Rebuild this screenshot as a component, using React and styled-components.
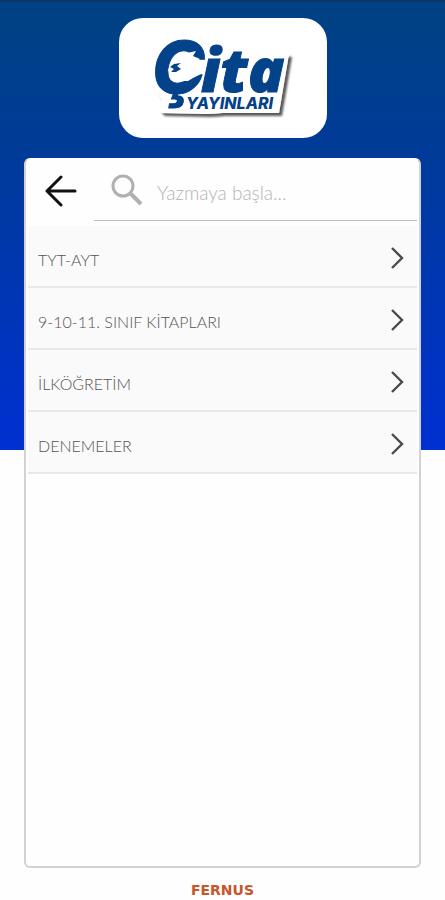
import React, { useState } from "react";
import styled, { createGlobalStyle } from "styled-components";

const GlobalStyle = createGlobalStyle`
  * {
    box-sizing: border-box;
  }

  body {
    margin: 0;
    background: #fefefe;
    font-family: "Lato", "Open Sans", sans-serif;
  }
`;

const Page = styled.div`
  display: flex;
  flex-direction: column;
  align-items: center;
  min-height: 100vh;
  padding: 16px 24px 0;
  border-top: 2px solid #0a3566;
  background: linear-gradient(#004282, #003a9c 38%, #0030d2) no-repeat top / 100% calc(50vh - 2px);
`;

const LogoCard = styled.header`
  display: flex;
  align-items: center;
  justify-content: center;
  width: 208px;
  height: 120px;
  margin-bottom: 20px;
  border-radius: 24px;
  background: #fff;
`;

const LogoText = styled.text`
  font-family: ${({ $font }) => $font}, sans-serif;
  font-style: italic;
  font-weight: 800;
  font-size: ${({ $size }) => $size}px;
  fill: #04428a;
  stroke: #04428a;
  stroke-width: ${({ $stroke }) => $stroke || 0};
`;

const Panel = styled.main`
  flex: 1;
  width: 100%;
  padding: 0 2px;
  border: 2px solid #d2d2d2;
  border-top-color: #fff;
  border-radius: 6px;
  background: #fefefe;
`;

const Toolbar = styled.div`
  display: flex;
  height: 61px;
  margin-bottom: 5px;
`;

const BackButton = styled.button`
  display: flex;
  align-items: center;
  justify-content: center;
  width: 66px;
  padding: 0;
  border: 0;
  background: none;
  color: #111;
  cursor: pointer;
`;

const SearchBox = styled.label`
  display: flex;
  flex: 1;
  align-items: center;
  gap: 14px;
  min-width: 0;
  padding-left: 17px;
  border-bottom: 1px solid #bdbdbd;
  color: #b0b0b0;
`;

const SearchInput = styled.input`
  flex: 1;
  min-width: 0;
  padding: 4px 0 0;
  border: 0;
  outline: none;
  background: none;
  color: #666;
  font-family: inherit;
  font-size: 19px;
  font-weight: 300;

  &::placeholder {
    color: #b4b4b4;
    opacity: 1;
  }
`;

const List = styled.ul`
  margin: 0;
  padding: 0;
  list-style: none;
`;

const RowButton = styled.button`
  display: flex;
  align-items: center;
  justify-content: space-between;
  width: 100%;
  height: 62px;
  padding: 4px 13px 0 10px;
  border: 0;
  border-bottom: 2px solid #e8e8e8;
  background: #fafafa;
  color: #555;
  font-family: inherit;
  font-size: 16px;
  font-weight: 300;
  line-height: 20px;
  text-align: left;
  cursor: pointer;
`;

const RowLabel = styled.span`
  padding-top: 4px;
`;

const Footer = styled.footer`
  padding: 14px 0 2px;
  color: #c9552b;
  font-family: "DejaVu Sans", sans-serif;
  font-size: 14px;
  font-weight: 700;
  line-height: 16px;
  text-align: center;
`;

const categories = [
  "TYT-AYT",
  "9-10-11. SINIF KİTAPLARI",
  "İLKÖĞRETİM",
  "DENEMELER",
];

function Logo() {
  return (
    <svg width="150" height="120" viewBox="0 -17 150 120" role="img" aria-label="Çita Yayınları">
      <defs>
        <filter id="logoShadow" x="-10%" y="-10%" width="125%" height="130%">
          <feDropShadow dx="3" dy="3" stdDeviation="1" floodColor="#222" floodOpacity="0.75" />
        </filter>
      </defs>
      <path
        d="M5 34 C5 14 18 4 34 4 L58 8 L141 19 L131 78 L74 78 Q66 79 58 79 L14 78 Q8 74 14 65 C8 58 4 48 5 34Z"
        fill="#fff"
        filter="url(#logoShadow)"
      />
      <path d="M0 0 H144 V19 L138 23 L60 14 L30 2 L6 20 V66 L0 70Z" fill="#fff" />
      <LogoText $font="Inter" $size={71} $stroke={1} x="4" y="58">Ç</LogoText>
      <LogoText $font='"Open Sans"' $size={60} $stroke={1} x="53" y="57">ita</LogoText>
      <LogoText $font="Inter" $size={16} x="38" y="74">YAYINLARI</LogoText>
      {/* cheetah head inside the big letter */}
      <path
        d="M20 35 L23 28 L28 24 L31 17 L34 21 L39 18 L48 16 L45 21 L52 24 L47 28 L53 33 L53 39 L45 43 L40 46 L33 46 L27 45 L23 42 L29 40 L22 39Z"
        fill="#fff"
      />
      <path
        d="M22 32 L26 29 L33 28 L29 31 L33 34 L28 37 L23 37 L26 34Z"
        fill="#04428a"
      />
    </svg>
  );
}

export default function App() {
  const [search, setSearch] = useState("");

  const handleSearchChange = (event) => {
    setSearch(event.target.value);
  };

  const visible = categories.filter((name) =>
    name.toLocaleLowerCase("tr").includes(search.toLocaleLowerCase("tr"))
  );

  return (
    <>
      <GlobalStyle />
      <Page>
        <LogoCard>
          <Logo />
        </LogoCard>
        <Panel>
          <Toolbar>
            <BackButton aria-label="Geri">
              <svg width="32" height="32" viewBox="0 0 32 32" fill="none" stroke="currentColor" strokeWidth="3" strokeLinecap="round" strokeLinejoin="round">
                <path d="M16 2 L2 16 L16 30 M2 16 H30" />
              </svg>
            </BackButton>
            <SearchBox>
              <svg width="32" height="32" viewBox="0 0 32 32" fill="none" stroke="currentColor" strokeWidth="3">
                <circle cx="12" cy="12" r="10" />
                <path d="M20 20 L30 30" strokeWidth="4" />
              </svg>
              <SearchInput
                type="text"
                aria-label="Ara"
                placeholder="Yazmaya başla..."
                value={search}
                onChange={handleSearchChange}
              />
            </SearchBox>
          </Toolbar>
          <List>
            {visible.map((name) => (
              <li key={name}>
                <RowButton>
                  <RowLabel>{name}</RowLabel>
                  <svg width="14" height="22" viewBox="0 0 14 22" fill="none" stroke="#4a4a4a" strokeWidth="2.4">
                    <path d="M2 1 L12 11 L2 21" />
                  </svg>
                </RowButton>
              </li>
            ))}
          </List>
        </Panel>
        <Footer>FERNUS</Footer>
      </Page>
    </>
  );
}
